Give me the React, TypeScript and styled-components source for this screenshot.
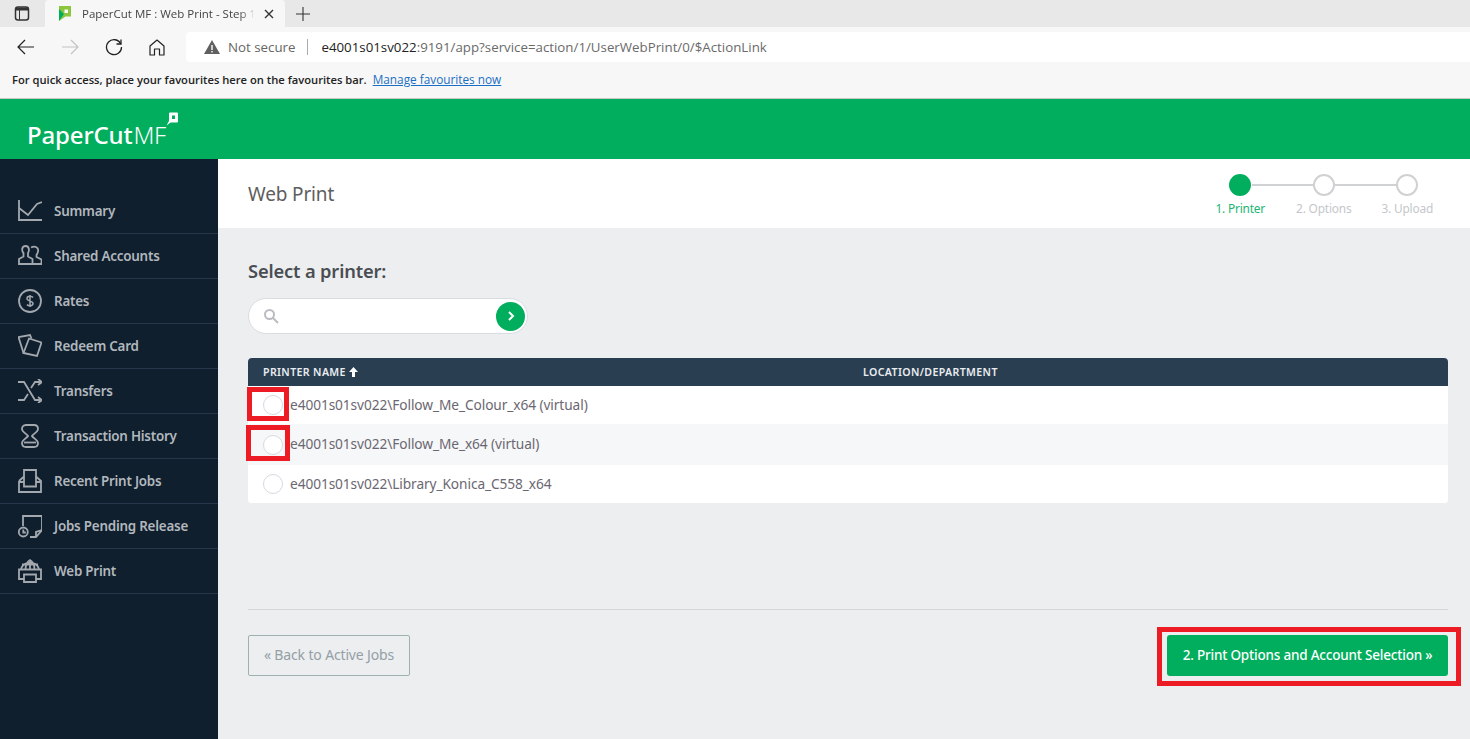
import React from "react";
import styled, { createGlobalStyle } from "styled-components";

const Global = createGlobalStyle`
  html, body { margin: 0; padding: 0; height: 100%; overflow: hidden; background: #edeef0; }
  * { box-sizing: border-box; }
  #root { height: 739px; }
`;
const Page = styled.div`display:flex;flex-direction:column;width:1470px;height:739px;font-family:"Noto Sans","Open Sans",sans-serif;position:relative;overflow:hidden;`;
const TabStrip = styled.div`height:27px;background:#e8e8e8;display:flex;align-items:flex-end;`;
const WinButton = styled.div`width:45px;height:27px;display:flex;align-items:center;justify-content:center;padding-right:1px;color:#333;`;
const Tab = styled.div`width:240px;height:27px;background:#f7f7f7;border-radius:4px 4px 0 0;display:flex;align-items:center;padding:0 10px 0 13px;gap:10px;`;
const TabTitle = styled.span`flex:1;font:11.5px "Open Sans",sans-serif;color:#444;white-space:nowrap;overflow:hidden;mask-image:linear-gradient(to right,#000 92%,rgba(0,0,0,.25));`;
const PlusBtn = styled.div`margin-left:8px;width:20px;height:27px;display:flex;align-items:center;justify-content:center;color:#333;`;
const AddressRow = styled.div`height:38px;padding-top:2px;background:#f7f7f7;display:flex;align-items:center;`;
const NavBtn = styled.div<{ $w: number; $off?: boolean }>`width:${p => p.$w}px;display:flex;justify-content:center;align-items:center;color:${p => p.$off ? "#c4c4c4" : "#222"};`;
const Url = styled.div`flex:1;height:30px;margin-left:12px;background:#fff;border-radius:4px 0 0 4px;display:flex;align-items:center;padding-left:18px;font:13.3px "Open Sans",sans-serif;`;
const NotSecure = styled.span`color:#666;margin-left:8px;`;
const Sep = styled.span`width:1px;height:16px;background:#aaa;margin:0 13px 0 12px;`;
const Host = styled.span`color:#222;`;
const UrlRest = styled.span`color:#6a6a6a;`;
const FavBar = styled.div`height:34px;background:#f7f7f7;border-bottom:1px solid #c8c8c8;display:flex;align-items:center;padding:0 0 5px 12px;font:600 11.2px "Open Sans",sans-serif;color:#222;white-space:nowrap;`;
const FavLink = styled.a`margin-left:6px;color:#1a6fc4;text-decoration:underline;font-weight:400;font-size:11.8px;`;
const Brand = styled.div`height:60px;background:#00ae5d;padding-left:27px;display:flex;align-items:flex-start;`;
const BrandName = styled.span`margin-top:20px;color:#fff;font:500 24px/32px "Noto Sans",sans-serif;letter-spacing:-.15px;`;
const BrandSuffix = styled.span`font-weight:300;letter-spacing:-.3px;margin-left:1px;`;
const BrandMark = styled.svg`margin:13px 0 0 0;`;
const Body = styled.div`flex:1;display:flex;min-height:0;`;
const Side = styled.nav`width:218px;background:#0f1f2e;padding-top:30px;`;
const Item = styled.div`height:45px;border-bottom:1px solid #25364a;display:flex;align-items:center;padding:0 0 0 18px;gap:12px;color:#b2b7bd;font:600 13.4px "Noto Sans",sans-serif;letter-spacing:-.22px;`;
const ItemIcon = styled.svg`width:24px;height:24px;flex:none;fill:none;stroke:#a3a8ae;stroke-width:1.8;`;
const Main = styled.main`flex:1;display:flex;flex-direction:column;`;
const TitleBar = styled.header`height:69px;background:#fff;display:flex;justify-content:space-between;padding:0 21px 0 30px;`;
const Title = styled.h1`margin:0;font:400 19px/71px "Noto Sans",sans-serif;color:#5e5e5e;letter-spacing:-.15px;`;
const Steps = styled.div`display:flex;padding-top:15px;`;
const Step = styled.div<{ $active?: boolean }>`width:83.5px;display:flex;flex-direction:column;align-items:center;gap:4px;position:relative;font:400 11.9px "Noto Sans",sans-serif;letter-spacing:-.2px;color:${p => p.$active ? "#20b573" : "#c4c7cb"};`;
const Dot = styled.span<{ $active?: boolean }>`width:22px;height:22px;border-radius:50%;background:${p => p.$active ? "#00ae5d" : "#fff"};border:2px solid ${p => p.$active ? "#00ae5d" : "#cfd1d3"};position:relative;z-index:1;`;
const StepLine = styled.span`position:absolute;left:53px;top:10px;width:62px;height:2px;background:#cfd1d3;`;
const Content = styled.section`flex:1;padding:31px 22px 0 30px;display:flex;flex-direction:column;`;
const Heading = styled.h2`margin:0;font:600 18.3px/24px "Noto Sans",sans-serif;color:#4a4e53;letter-spacing:-.15px;`;
const Search = styled.div`margin-top:15px;width:280px;height:36px;border:1px solid #d9dde1;border-radius:18px;background:#fff;display:flex;align-items:center;justify-content:space-between;padding:0 2px 0 14px;`;
const Go = styled.span`width:29px;height:29px;border-radius:50%;background:#00ae5d;display:flex;align-items:center;justify-content:center;`;
const Table = styled.div`margin-top:24px;border-radius:4px;background:#fff;overflow:hidden;`;
const Head = styled.div`height:28px;background:#2a3e52;display:grid;grid-template-columns:600px 1fr;align-items:center;padding-left:15px;color:#e9edf0;font:600 10.6px "Noto Sans",sans-serif;letter-spacing:.37px;`;
const HeadCell = styled.span`display:flex;align-items:center;gap:3px;`;
const Row = styled.div<{ $alt?: boolean; $h: number }>`height:${p => p.$h}px;background:${p => p.$alt ? "#f6f7f9" : "#fff"};display:flex;align-items:center;padding-left:15px;gap:7px;font:400 13.7px "Noto Sans",sans-serif;letter-spacing:-.08px;color:#6b6771;`;
const RowText = styled.span`padding-bottom:2px;`;
const Radio = styled.span`width:20px;height:20px;border-radius:50%;border:1px solid #d5dadf;background:#fff;flex:none;`;
const Footer = styled.div`margin-top:106px;border-top:1px solid #d4d6d9;padding-top:25px;display:flex;justify-content:space-between;`;
const Back = styled.button`width:162px;height:41px;padding:0 0 2px;border:1px solid #9fb0b0;border-radius:2px;background:transparent;color:#93a0a6;font:400 14px "Noto Sans",sans-serif;letter-spacing:-.15px;`;
const Next = styled.button`width:281px;height:41px;padding:0 0 2px;border:0;border-radius:3px;background:#00ae5d;color:#fff;font:500 13.5px "Noto Sans",sans-serif;letter-spacing:-.2px;`;
const Mark = styled.div<{ $x: number; $y: number; $w: number; $h: number; $b: number }>`position:absolute;left:${p => p.$x}px;top:${p => p.$y}px;width:${p => p.$w}px;height:${p => p.$h}px;border:${p => p.$b}px solid #ed1c24;pointer-events:none;`;

const icons: Record<string, React.ReactNode> = {
  summary: <><path d="M1 1v20h23" /><path d="M1 9l9 7 9-11 5-2" /></>,
  shared: <><path d="M1 20v-5l4.500-2.500V9C3.500 7 3.500 2 7.500 2s4 5 2.500 7v3.500l4.500 2.500v5z" /><path d="M13 3.500c4-2 8 0 7 4-.2 1.500-1 2.500-1.500 3.500v2l5 2.500V20h-9" /></>,
  rates: <><circle cx="12" cy="12" r="11" /><path d="M15 8.500c-1-1.500-6-2-6 1s6 2 6 5-5 2.500-6 1M12 6v12" strokeWidth="1.500" /></>,
  redeem: <><path d="M5.500 19L.5 3 12 1l1.500 3.500" /><path d="M11 4.500l12.500 4L19 22l-13.500-3z" /></>,
  transfers: <><path d="M0 3h6l11 18h6M0 21h6l4-6M13 9l4-6h6" /><path d="M20 0l4 3-4 3M20 18l4 3-4 3" /></>,
  history: <><path d="M8 1h8c3 0 4 2 4 4 0 3-5 5-6 7 1 2 6 4 6 7 0 3-1 4-4 4H8c-3 0-4-1-4-4 0-3 5-5 6-7-1-2-6-4-6-7 0-2 1-4 4-4z" /><path d="M6 18.500h12" /></>,
  recent: <><path d="M1 12v11h22V12l-5-4.500M1 12l5-4.500" /><path d="M6 12V1h12v11" /><path d="M1 13h5v4.500h12V13h5" /></>,
  pending: <><path d="M5 12V2h19v14l-6 7h-6" /><path d="M24 16l-6 2v5" /><circle cx="5.300" cy="18" r="4.500" /><path d="M5.300 15.500v3h2.500" /></>,
  web: <><path d="M3 10a9.500 9.500 0 0 1 18 0M12 1v9M7.500 10c0-4 2-8 4.500-9 2.500 1 4.500 5 4.500 9M4 5.500h16" /><path d="M6 20H1V10.500h22V20h-5" /><path d="M6 15.500h12V23H6z" /></>,
};
const nav: [string, string][] = [["summary", "Summary"], ["shared", "Shared Accounts"], ["rates", "Rates"], ["redeem", "Redeem Card"], ["transfers", "Transfers"], ["history", "Transaction History"], ["recent", "Recent Print Jobs"], ["pending", "Jobs Pending Release"], ["web", "Web Print"]];

export default function App() {
  return (
    <Page>
      <Global />
      <TabStrip>
        <WinButton>
          <svg width="16" height="15" viewBox="0 0 16 15" fill="none" stroke="currentColor" strokeWidth="1.500"><rect x="1.500" y="1" width="13" height="13" rx="2.500" /><path d="M1.500 3h13" strokeWidth="3" /><path d="M5.500 4v10" strokeWidth="1" /></svg>
        </WinButton>
        <Tab>
          <svg width="14" height="17" viewBox="0 0 14 17"><path d="M1 1h12v10.500H7.500L1 16z" fill="#8cc63f" /><path d="M1 4l5 5L1 16z" fill="#00ae5d" /><path d="M6.500 4.500H10v3.500H6.500z" fill="#fff" /></svg>
          <TabTitle>PaperCut MF : Web Print - Step 1</TabTitle>
          <svg width="12" height="12" viewBox="0 0 12 12" stroke="#333" strokeWidth="1.400"><path d="M2 2l8 8M10 2l-8 8" /></svg>
        </Tab>
        <PlusBtn>
          <svg width="16" height="16" viewBox="0 0 16 16" stroke="currentColor" strokeWidth="1.100"><path d="M8 1v14M1 8h14" /></svg>
        </PlusBtn>
      </TabStrip>
      <AddressRow>
        <NavBtn $w={52}><svg width="18" height="16" viewBox="0 0 18 16" fill="none" stroke="currentColor" strokeWidth="1.200"><path d="M17 8H1M8 1L1 8l7 7" /></svg></NavBtn>
        <NavBtn $w={36} $off><svg width="18" height="16" viewBox="0 0 18 16" fill="none" stroke="currentColor" strokeWidth="1.200"><path d="M1 8h16M10 1l7 7-7 7" /></svg></NavBtn>
        <NavBtn $w={52}><svg width="18" height="18" viewBox="0 0 18 18" fill="none" stroke="currentColor" strokeWidth="1.300"><path d="M15.800 6A7.500 7.500 0 1 0 16.500 9" /><path d="M16 1.500V6h-4.500" /></svg></NavBtn>
        <NavBtn $w={34}><svg width="16" height="17" viewBox="0 0 16 17" fill="none" stroke="currentColor" strokeWidth="1.200"><path d="M1 7l7-6 7 6v9h-4.500v-6h-5v6H1z" strokeLinejoin="round" /></svg></NavBtn>
        <Url>
          <svg width="16" height="14" viewBox="0 0 16 14"><path d="M8 0l8 14H0z" fill="#606060" /><path d="M7.300 5h1.400v5H7.300zM7.300 11h1.400v1.400H7.300z" fill="#fff" /></svg>
          <NotSecure>Not secure</NotSecure>
          <Sep />
          <span><Host>e4001s01sv022</Host><UrlRest>:9191/app?service=action/1/UserWebPrint/0/$ActionLink</UrlRest></span>
        </Url>
      </AddressRow>
      <FavBar>For quick access, place your favourites here on the favourites bar.<FavLink>Manage favourites now</FavLink></FavBar>
      <Brand>
        <BrandName>PaperCut<BrandSuffix>MF</BrandSuffix></BrandName>
        <BrandMark width="12" height="14" viewBox="0 0 12 14"><path d="M3 1.500a1 1 0 0 1 1-1h7a1 1 0 0 1 1 1v8a1 1 0 0 1-1 1H4.500L.5 13.500 3 9z" fill="#fff" /><rect x="6" y="3.500" width="3" height="3.500" fill="#00ae5d" /></BrandMark>
      </Brand>
      <Body>
        <Side>
          {nav.map(([k, label]) => (
            <Item key={k}><ItemIcon viewBox="0 0 24 24">{icons[k]}</ItemIcon>{label}</Item>
          ))}
        </Side>
        <Main>
          <TitleBar>
            <Title>Web Print</Title>
            <Steps>
              <Step $active><Dot $active /><StepLine />1. Printer</Step>
              <Step><Dot /><StepLine />2. Options</Step>
              <Step><Dot />3. Upload</Step>
            </Steps>
          </TitleBar>
          <Content>
            <Heading>Select a printer:</Heading>
            <Search>
              <svg width="16" height="16" viewBox="0 0 16 16" fill="none" stroke="#b9bdc1" strokeWidth="2"><circle cx="6.500" cy="6.500" r="4.500" /><path d="M10 10l5 5" /></svg>
              <Go><svg width="10" height="10" viewBox="0 0 10 10" fill="none" stroke="#fff" strokeWidth="2"><path d="M3 1l4 4-4 4" /></svg></Go>
            </Search>
            <Table>
              <Head>
                <HeadCell>PRINTER NAME <svg width="9" height="10" viewBox="0 0 9 10" fill="#fff"><path d="M4.500 0L9 5H6v5H3V5H0z" /></svg></HeadCell>
                <HeadCell>LOCATION/DEPARTMENT</HeadCell>
              </Head>
              <Row $h={38}><Radio /><RowText>e4001s01sv022\Follow_Me_Colour_x64 (virtual)</RowText></Row>
              <Row $h={41} $alt><Radio /><RowText>e4001s01sv022\Follow_Me_x64 (virtual)</RowText></Row>
              <Row $h={38}><Radio /><RowText>e4001s01sv022\Library_Konica_C558_x64</RowText></Row>
            </Table>
            <Footer>
              <Back>« Back to Active Jobs</Back>
              <Next>2. Print Options and Account Selection »</Next>
            </Footer>
          </Content>
        </Main>
      </Body>
      <Mark $x={247} $y={387} $w={42} $h={34} $b={5} />
      <Mark $x={246} $y={425} $w={44} $h={36} $b={5} />
      <Mark $x={1157} $y={627} $w={304} $h={59} $b={5} />
    </Page>
  );
}
